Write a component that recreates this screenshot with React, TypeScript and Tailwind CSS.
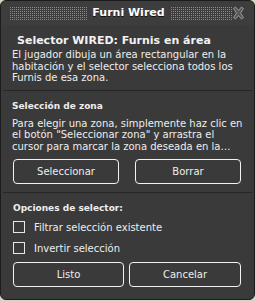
import React from 'react';

const dots =
  'bg-[conic-gradient(from_90deg_at_1px_1px,#8a8a8a_25%,transparent_0)] bg-size-[2px_2px]';

function Button({ label, className = '' }: { label: string; className?: string }) {
  return (
    <button
      className={`h-[25px] rounded-[4px] border border-[#f2f2f2] bg-[#3a3a3a] text-[10px] text-[#eeeeee] ${className}`}
    >
      {label}
    </button>
  );
}

function Check({ label }: { label: string }) {
  return (
    <label className="flex items-center gap-[9px] h-[12px]">
      <span className="w-[12px] h-[12px] border border-[#e8e8e8] bg-[#3a3a3a]" />
      <span className="text-[10px] text-[#eeeeee]">{label}</span>
    </label>
  );
}

export default function App() {
  return (
    <div className="w-[255px] h-[302px] bg-[#d9d4c2] font-['DejaVu_Sans',sans-serif]">
      <div className="w-[255px] h-[300px] rounded-[6px] border border-[#1c1c1c] bg-[#3a3a3a] overflow-hidden flex flex-col">
        {/* barra de título */}
        <div className="h-[24px] flex items-center pl-[8px] pr-[9px] bg-[#3d3d3d]">
          <div className={`w-[78px] h-[14px] ${dots}`} />
          <span className="flex-1 text-center text-[11px] font-bold text-white [text-shadow:0_1px_0_#111]">
            Furni Wired
          </span>
          <div className={`w-[63px] h-[14px] ${dots}`} />
          <svg width="13" height="14" viewBox="0 0 13 14" className="ml-[-1px]">
            <path
              d="M1.5 2.5 L3.5 1 L6.5 4.5 L9.5 1 L11.5 2.5 L8.5 7 L11.5 11.5 L9.5 13 L6.5 9.5 L3.5 13 L1.5 11.5 L4.5 7 Z"
              fill="#595959"
              stroke="#9a9a9a"
              strokeWidth="1"
            />
          </svg>
        </div>

        {/* descripción */}
        <div className="mx-[2px] px-[9px] pt-[9px] pb-[6px] border-b border-[#262626]">
          <div className="pl-[5px] text-[11px] font-bold text-[#f2f2f2] leading-[14px]">
            Selector WIRED: Furnis en área
          </div>
          <p className="mt-[1px] text-[10px] leading-[11.5px] text-[#eeeeee]">
            El jugador dibuja un área rectangular en la habitación y el selector selecciona todos los Furnis de esa zona.
          </p>
        </div>

        {/* selección de zona */}
        <div className="mx-[2px] px-[9px] pt-[9px] pb-[8px] border-b border-[#262626]">
          <div className="text-[9px] font-bold text-[#eeeeee] leading-[12px]">Selección de zona</div>
          <p className="mt-[6px] text-[10px] leading-[11.5px] text-[#eeeeee] line-clamp-3">
            Para elegir una zona, simplemente haz clic en el botón "Seleccionar zona" y arrastra el cursor para marcar la zona deseada en la habitación.
          </p>
          <div className="mt-[7px] ml-[1px] flex gap-[16px]">
            <Button label="Seleccionar" className="w-[106px]" />
            <Button label="Borrar" className="w-[106px]" />
          </div>
        </div>

        {/* opciones */}
        <div className="mx-[2px] px-[10px] pt-[9px] flex flex-col">
          <div className="text-[9px] font-bold text-[#eeeeee] leading-[12px]">Opciones de selector:</div>
          <div className="mt-[7px] flex flex-col gap-[9px]">
            <Check label="Filtrar selección existente" />
            <Check label="Invertir selección" />
          </div>
          <div className="mt-[8px] flex gap-[5px]">
            <Button label="Listo" className="w-[111px]" />
            <Button label="Cancelar" className="w-[112px]" />
          </div>
        </div>
      </div>
    </div>
  );
}
